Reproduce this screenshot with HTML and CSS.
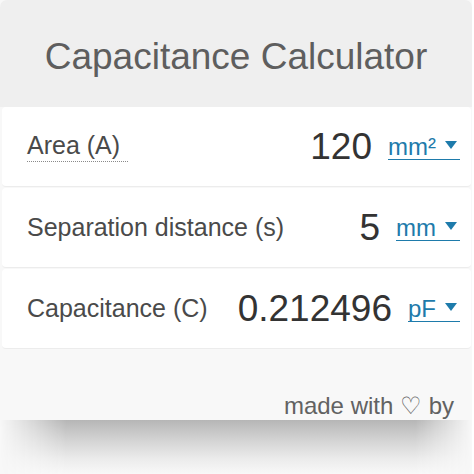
FILE: index.html
```html
<!DOCTYPE html>
<html>
<head>
<meta charset="utf-8">
<link rel="stylesheet" href="styles.css">
</head>
<body>
<div class="widget">
  <div class="header"><h1 class="title">Capacitance Calculator</h1></div>
  <div class="rows">
    <div class="row">
      <span class="label"><span class="dotted">Area (A)</span></span>
      <span class="value">120</span>
      <span class="unit"><span class="unit-text">mm²</span><svg class="arrow" width="12" height="8" viewBox="0 0 12 8"><polygon points="0,0 12,0 6,8" fill="#1e7bab"/></svg></span>
    </div>
    <div class="row">
      <span class="label">Separation distance (s)</span>
      <span class="value">5</span>
      <span class="unit"><span class="unit-text">mm</span><svg class="arrow" width="12" height="8" viewBox="0 0 12 8"><polygon points="0,0 12,0 6,8" fill="#1e7bab"/></svg></span>
    </div>
    <div class="row">
      <span class="label">Capacitance (C)</span>
      <span class="value">0.212496</span>
      <span class="unit"><span class="unit-text">pF</span><svg class="arrow" width="12" height="8" viewBox="0 0 12 8"><polygon points="0,0 12,0 6,8" fill="#1e7bab"/></svg></span>
    </div>
  </div>
  <div class="footer"><span class="made">made with ♡ by</span></div>
  <div class="shadow"></div>
</div>
</body>
</html>
```
FILE: styles.css
```css
html, body {
  margin: 0;
  padding: 0;
  background: #ffffff;
}
body {
  font-family: "Liberation Sans", Arial, sans-serif;
  width: 474px;
  height: 474px;
  overflow: hidden;
}
.widget {
  width: 472px;
  background: #f8f8f8;
}
.header {
  box-sizing: border-box;
  height: 107px;
  background: #efefef;
  border-radius: 7px 7px 0 0;
  padding-top: 36px;
  text-align: center;
}
.title {
  margin: 0;
  font-size: 37px;
  font-weight: normal;
  line-height: normal;
  color: #5e5e5e;
}
.rows {
  padding: 0 1px 0 2px;
  display: flex;
  flex-direction: column;
  gap: 1px;
  background: #f8f8f8;
}
.row {
  box-sizing: border-box;
  height: 80px;
  background: #ffffff;
  border-radius: 4px;
  border-bottom: 1px solid #ececec;
  display: flex;
  align-items: center;
  padding: 0 11px 0 25px;
}
.label {
  flex: 1;
  font-size: 25px;
  color: #4a4a4a;
}
.dotted {
  display: inline-block;
  padding-right: 8px;
  padding-bottom: 1px;
  border-bottom: 1px dotted #8a8a8a;
  line-height: normal;
}
.value {
  font-size: 37px;
  color: #333333;
}
.unit {
  margin-left: 16px;
  display: inline-flex;
  align-items: center;
  border-bottom: 1px solid #1e7bab;
  color: #1e7bab;
  font-size: 24px;
  line-height: 25px;
}
.arrow {
  margin-left: 9px;
  margin-right: 3px;
  margin-top: -2px;
}
.footer {
  box-sizing: border-box;
  height: 71px;
  text-align: right;
  padding: 45px 18px 0 0;
  background: #f8f8f8;
}
.made {
  font-size: 24px;
  color: #626262;
  line-height: 24px;
}
.shadow {
  height: 55px;
  background: linear-gradient(to bottom, #b6b6b6 0%, #d2d2d2 35%, #ebebeb 70%, #f9f9f9 100%);
  -webkit-mask-image: linear-gradient(to right, transparent 0%, #000 14%, #000 88%, transparent 100%);
  mask-image: linear-gradient(to right, transparent 0%, #000 14%, #000 88%, transparent 100%);
}
```
